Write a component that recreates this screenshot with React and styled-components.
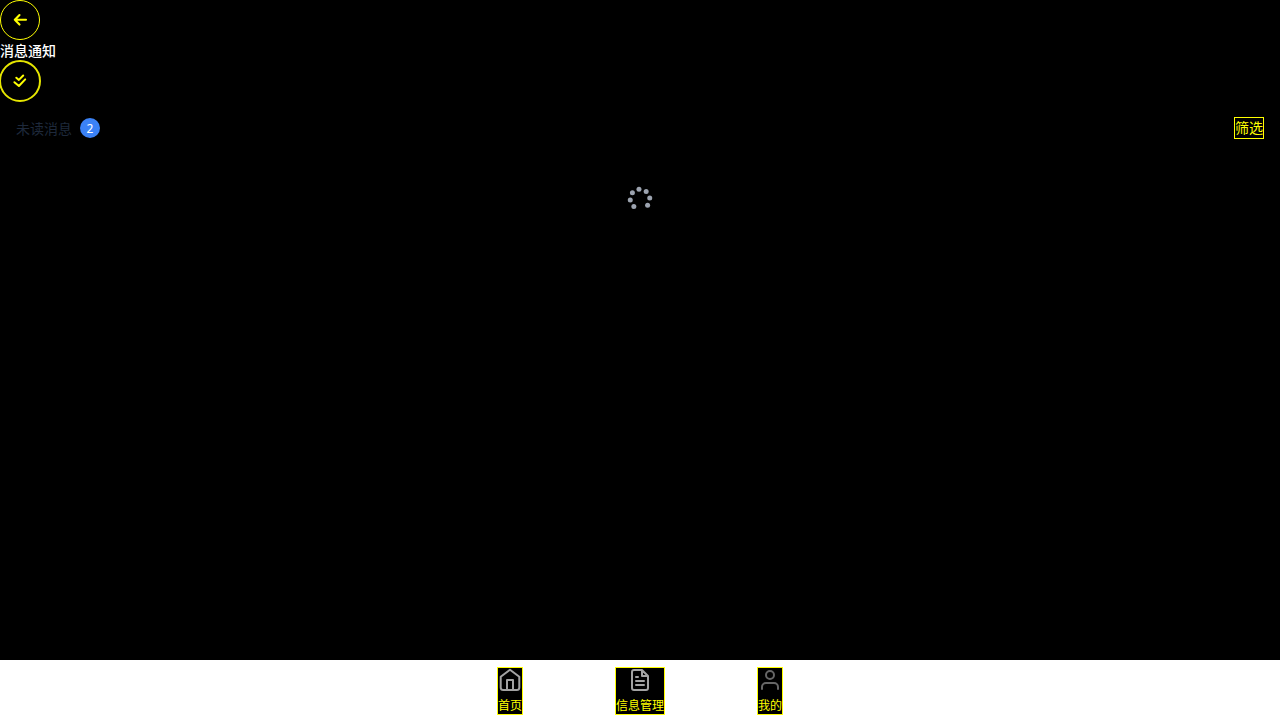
import React from 'react';
import styled, { createGlobalStyle } from 'styled-components';

const GlobalStyle = createGlobalStyle`
  * { box-sizing: border-box; }
  body {
    margin: 0;
    background: #000;
    color: #fff;
    font-size: 14px;
    line-height: 20px;
    font-family: "Liberation Sans", "Noto Sans CJK SC", sans-serif;
  }
  button { font: inherit; padding: 0; margin: 0; cursor: pointer; }
`;

const Page = styled.div`
  height: 720px;
  display: flex;
  flex-direction: column;
  overflow: hidden;
`;

const Header = styled.header`
  display: flex;
  flex-direction: column;
  align-items: flex-start;
`;

const RoundButton = styled.button`
  width: ${(p) => p.$size}px;
  height: ${(p) => p.$size}px;
  display: flex;
  align-items: center;
  justify-content: center;
  border: ${(p) => p.$line}px solid ${(p) => (p.$line > 1 ? '#e6e600' : '#ff0')};
  border-radius: 50%;
  background: #000;
  color: #ff0;
  margin-left: ${(p) => p.$shift || 0}px;
`;

const Title = styled.h1`
  margin: 0;
  height: 20px;
  font-size: 14px;
  line-height: 22px;
  font-weight: 500;
`;

const Toolbar = styled.div`
  display: flex;
  align-items: center;
  justify-content: space-between;
  padding: 15px 16px 0;
`;

const Unread = styled.div`
  display: flex;
  align-items: center;
  gap: 8px;
  height: 20px;
  color: #1e293b;
`;

const UnreadLabel = styled.span`
  padding-top: 2px;
`;

const Badge = styled.span`
  width: 20px;
  height: 20px;
  border-radius: 50%;
  background: #3b82f6;
  color: #fff;
  font-family: "Noto Sans", sans-serif;
  font-size: 12px;
  line-height: 21px;
  text-align: center;
`;

const Filter = styled.button`
  height: 22px;
  border: 1px solid #ff0;
  background: #000;
  color: #ff0;
  line-height: 20px;
`;

const Content = styled.main`
  flex: 1;
  display: flex;
  justify-content: center;
  align-items: flex-start;
  padding-top: 44px;
`;

const Nav = styled.nav`
  height: 60px;
  display: flex;
  justify-content: center;
  align-items: flex-start;
  gap: 92px;
  padding-top: 7px;
  background: #fff;
`;

const NavItem = styled.button`
  height: 48px;
  display: flex;
  flex-direction: column;
  align-items: center;
  border: 1px solid #ff0;
  background: #000;
  color: ${(p) => p.$tone};
`;

const NavLabel = styled.span`
  height: 18px;
  color: #ff0;
  font-size: 12px;
  line-height: 20px;
  margin-top: 4px;
`;

const Line = ({ size = 24, children, w = 2 }) => (
  <svg width={size} height={size} viewBox={`0 0 ${size} ${size}`} fill="none"
    stroke="currentColor" strokeWidth={w} strokeLinecap="round" strokeLinejoin="round">
    {children}
  </svg>
);

const SPINNER_ANGLES = [-96, -51, -6, 39, 129, 174, 219];

const Spinner = () => (
  <svg width="32" height="32" viewBox="0 0 32 32" fill="#9ca3af">
    {SPINNER_ANGLES.map((a) => (
      <circle key={a} r="2.5"
        cx={16 + 9.8 * Math.cos((a * Math.PI) / 180)}
        cy={16 + 9.8 * Math.sin((a * Math.PI) / 180)} />
    ))}
  </svg>
);

export default function App() {
  return (
    <Page>
      <GlobalStyle />
      <Header>
        <RoundButton $size={40} $line={1} aria-label="返回">
          <Line size={16} w={2.1}><path d="M14 7.8H2.8M7.5 3 2.8 7.8l4.7 4.8" /></Line>
        </RoundButton>
        <Title>消息通知</Title>
        <RoundButton $size={42} $line={2} $shift={-1} aria-label="全部已读">
          <Line size={16} w={2}>
            <path d="M4.3 4.7 6.9 6.9 11.2 2.5M2.4 9.2 6.9 13 13.2 6.4" />
          </Line>
        </RoundButton>
      </Header>
      <Toolbar>
        <Unread>
          <UnreadLabel>未读消息</UnreadLabel>
          <Badge>2</Badge>
        </Unread>
        <Filter>筛选</Filter>
      </Toolbar>
      <Content><Spinner /></Content>
      <Nav>
        <NavItem $tone="#a3a3a3">
          <Line>
            <path d="M2.7 8.8 12 1.8l9.3 7V19.5a2.5 2.5 0 0 1-2.5 2.5H5.2a2.5 2.5 0 0 1-2.5-2.5z" />
            <path d="M9 22V12h6v10" />
          </Line>
          <NavLabel>首页</NavLabel>
        </NavItem>
        <NavItem $tone="#a3a3a3">
          <Line>
            <path d="M14 2H6a2 2 0 0 0-2 2v16a2 2 0 0 0 2 2h12a2 2 0 0 0 2-2V8zM14 2v6h6M16 13H8M16 17H8M10 9H8" />
          </Line>
          <NavLabel>信息管理</NavLabel>
        </NavItem>
        <NavItem $tone="#666">
          <Line>
            <path d="M20 21v-2a4 4 0 0 0-4-4H8a4 4 0 0 0-4 4v2" />
            <circle cx="12" cy="7" r="4" />
          </Line>
          <NavLabel>我的</NavLabel>
        </NavItem>
      </Nav>
    </Page>
  );
}
